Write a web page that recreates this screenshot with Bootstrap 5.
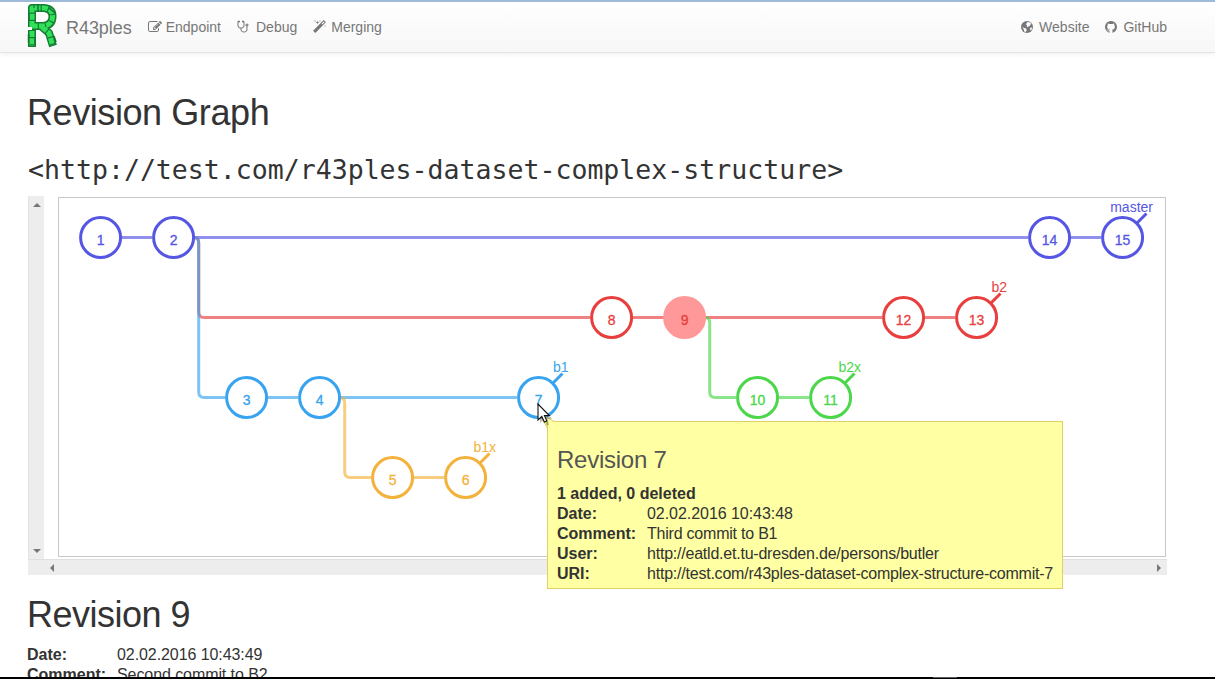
<!DOCTYPE html>
<html lang="en">
<head>
<meta charset="utf-8">
<meta name="viewport" content="width=device-width, initial-scale=1">
<title>R43ples - Revision Graph</title>
<link href="https://cdn.jsdelivr.net/npm/bootstrap@5.3.0/dist/css/bootstrap.min.css" rel="stylesheet">
<style>
  html, body { height: 100%; }
  body { font-family: "Liberation Sans", Arial, sans-serif; font-size: 16px; line-height: 20px; color: #333; background: #fff; overflow: hidden; }
  .topbar { height: 53px; padding: 0 40px 0 26px; border-top: 2px solid #9dbbd8; border-bottom: 1px solid #e4e4e4; background: linear-gradient(#fff, #f7f7f7); box-shadow: 0 1px 5px rgba(0,0,0,.07); color: #777; font-size: 14px; }
  .topbar .navbar-brand { font-size: 18px; color: #777; letter-spacing: -.05px; padding: 16px 8px 0 7px; line-height: 20px; margin: 0; }
  .topbar .nav-link { color: #777; line-height: 20px; padding: 15px 8px 0; gap: 4px; }
  .topbar .nav-link svg { margin-top: 3px; }
  .topbar .gap-wide { gap: 5px; }
  .topbar .ms-auto .nav-link { gap: 6px; }
  .topbar svg { fill: currentColor; flex: none; }
  .page-body { padding: 0 48px 0 28px; }
  h1 { font-size: 36px; line-height: 40px; font-weight: 400; margin: 0; letter-spacing: -.42px; position: static; }
  .page-title { padding-top: 40px; margin-left: -1px; }
  .rev-title { padding: 20px 0 10px; margin-left: -1px; letter-spacing: -.5px; }
  .graph-uri { font-family: "DejaVu Sans Mono", monospace; font-size: 26.55px; line-height: 34px; white-space: nowrap; }
  .graph-area { width: 1139px; height: 379px; margin-top: 9px; }
  .bar-v { width: 16px; height: 363px; background: #ededed; border-left: 1px solid #e3e3e3; padding: 7px 0 6px; }
  .bar-h { height: 16px; background: #ededed; border-top: 1px solid #e0e0e0; padding: 0 6px 0 22px; }
  .canvas-box { width: 1108px; height: 360px; border: 1px solid #c8c8c8; margin: 1px 0 0 14px; }
  .bar-v path, .bar-h path { fill: #777; }
  .canvas-box text { font: 14px "Liberation Sans", Arial, sans-serif; }
  .edges { fill: none; stroke-width: 3; stroke-opacity: .65; }
  .nodes circle { fill: #fff; stroke: currentColor; stroke-width: 3; }
  .nodes text, .tags text { fill: currentColor; }
  .nodes text { text-anchor: middle; stroke: currentColor; stroke-width: .3; }
  .tags text { text-anchor: end; }
  .tags path { stroke: currentColor; stroke-width: 3; }
  .nodes .picked { fill: #f99; stroke: #f99; }
  .c-master { color: #5656e4; } .c-red { color: #e83e3e; } .c-sky { color: #38a3ee; } .c-amber { color: #f3b23b; } .c-green { color: #4ad74a; }
  .rev-tip { left: 519px; top: 225px; width: 516px; height: 168px; padding: 24px 9px 0; background: #ffffa3; border: 1px solid #dfcf66; color: #333; }
  .rev-tip h2 { font-size: 24px; line-height: 28px; font-weight: 400; color: #555; margin: 0 0 10px; letter-spacing: -.25px; }
  .rev-list { display: grid; grid-template-columns: 90px auto; margin: 0; white-space: nowrap; }
  .rev-list dd { margin: 0; letter-spacing: -.08px; }
  .rev-tip .rev-list dd { letter-spacing: -.22px; }
  .rev-tip .rev-list .plain { letter-spacing: -.05px; }
  .page-body > .rev-list { margin-left: -1px; }
  .tip-caret { left: -10px; top: -9px; }
  .pointer { left: 509px; top: 207px; }
  .bottom-edge { height: 2px; background: #000; padding-left: 933px; }
  .bottom-edge span { width: 24px; height: 1px; background: #596068; }
</style>
</head>
<body class="d-flex flex-column">
<nav class="topbar navbar navbar-expand flex-shrink-0 align-items-start">
  <svg width="33" height="46" viewBox="0 0 33 46">
    <g fill="none" stroke-linejoin="round">
      <path d="M6 25V6H18Q27 7 26.500 15Q26 23.500 17 24H6M6 28V45M16 25L23 31L27 44" stroke="#147d33" stroke-width="8"/>
      <path d="M6 25V6H18Q27 7 26.500 15Q26 23.500 17 24H6M6 29V44M16 25L23 31L26.500 43" stroke="#31df58" stroke-width="5" stroke-dasharray="6 1.200"/>
      <path d="M2.500 32v9M9 35v8M3 12v6M23 6l6 5M28 34l2 6M12 2v8" stroke="#1c7137" stroke-width="1.500"/>
    </g>
  </svg>
  <a class="navbar-brand" href="#">R43ples</a>
  <ul class="navbar-nav">
    <li class="nav-item"><a class="nav-link d-flex" href="#"><svg width="14" height="14" viewBox="0 0 1792 1792"><path d="M888 1184l116-116-152-152-116 116v56h96v96h56zm440-720q-16-16-33 1l-350 350q-17 17-1 33t33-1l350-350q17-17 1-33zm80 594v190q0 119-84.500 203.500t-203.500 84.500h-832q-119 0-203.500-84.500t-84.500-203.500v-832q0-119 84.500-203.500t203.500-84.500h832q63 0 117 25 15 7 18 23 3 17-9 29l-49 49q-14 14-32 8-23-6-45-6h-832q-66 0-113 47t-47 113v832q0 66 47 113t113 47h832q66 0 113-47t47-113v-126q0-13 9-22l64-64q15-15 35-7t20 29zm-96-738l288 288-672 672h-288v-288zm444 132l-92 92-288-288 92-92q28-28 68-28t68 28l152 152q28 28 28 68t-28 68z"/></svg><span>Endpoint</span></a></li>
    <li class="nav-item"><a class="nav-link d-flex gap-wide" href="#"><svg width="14" height="14" viewBox="100 0 1600 1792"><path d="M1344 640q0-26-19-45t-45-19-45 19-19 45 19 45 45 19 45-19 19-45zm128 0q0 62-35.500 111t-92.500 70v395q0 159-131.500 271.500t-316.500 112.500-316.500-112.500-131.500-271.500v-132q-164-20-274-128t-110-252v-512q0-26 19-45t45-19q6 0 16 2 17-30 47-48t65-18q53 0 90.500 37.500t37.500 90.500-37.500 90.500-90.500 37.500q-33 0-64-18v402q0 106 94 181t226 75 226-75 94-181v-402q-31 18-64 18-53 0-90.500-37.500t-37.500-90.500 37.500-90.500 90.500-37.500q35 0 65 18t47 48q10-2 16-2 26 0 45 19t19 45v512q0 144-110 252t-274 128v132q0 106 94 181t226 75 226-75 94-181v-395q-57-21-92.500-70t-35.500-111q0-80 56-136t136-56 136 56 56 136z"/></svg><span>Debug</span></a></li>
    <li class="nav-item"><a class="nav-link d-flex" href="#"><svg width="14" height="14" viewBox="0 0 1792 1792"><path d="M1190 581l293-293-107-107-293 293zm447-293q0 27-18 45l-1286 1286q-18 18-45 18t-45-18l-198-198q-18-18-18-45t18-45l1286-1286q18-18 45-18t45 18l198 198q18 18 18 45zm-1351-190l98 30-98 30-30 98-30-98-98-30 98-30 30-98zm350 162l196 60-196 60-60 196-60-196-196-60 196-60 60-196zm930 478l98 30-98 30-30 98-30-98-98-30 98-30 30-98zm-640-640l98 30-98 30-30 98-30-98-98-30 98-30 30-98z"/></svg><span>Merging</span></a></li>
  </ul>
  <ul class="navbar-nav ms-auto">
    <li class="nav-item"><a class="nav-link d-flex" href="#"><svg width="12" height="14" viewBox="0 0 12 14"><circle cx="6" cy="7" r="6"/><path fill="#fbfbfb" d="M6.500 2L9 2.500 10.500 4 9.300 4.600 8.800 6 7.300 6.200 7.200 7.500 5.700 6.500 6 5 4.800 4.500 5.600 3.200zM1.200 6.500L3 8l1.600.3L5.800 10 4.700 12 3.200 11.400 2.800 9.600zM9.300 7.600l2 .2-.8 2-1.500.7z"/></svg><span>Website</span></a></li>
    <li class="nav-item"><a class="nav-link d-flex" href="#"><svg width="12" height="14" viewBox="128 0 1536 1792"><path d="M896 128q209 0 385.500 103t279.500 279.500 103 385.500q0 251-146.500 451.500t-378.500 277.500q-27 5-40-7t-13-30q0-3 .5-76.500t.5-134.500q0-97-52-142 57-6 102.500-18t94-39 81-66.500 53-105 20.500-150.500q0-119-79-206 37-91-8-204-28-9-81 11t-92 44l-38 24q-93-26-192-26t-192 26q-16-11-42.500-27t-83.500-38.500-85-13.500q-45 113-8 204-79 87-79 206 0 85 20.500 150t52.500 105 80.500 67 94 39 102.500 18q-39 36-49 103-21 10-45 15t-57 5-65.500-21.500-55.500-62.500q-19-32-48.500-52t-49.500-24l-20-3q-21 0-29 4.500t-5 11.500 9 14 13 12l7 5q22 10 43.500 38t31.500 51l10 23q13 38 44 61.500t67 30 69.500 7 55.500-3.500l23-4q0 38 .5 88.500t.5 54.500q0 18-13 30t-40 7q-232-77-378.500-277.500t-146.500-451.500q0-209 103-385.500t279.500-279.500 385.500-103z"/></svg><span>GitHub</span></a></li>
  </ul>
</nav>
<main class="page-body flex-grow-1">
  <h1 class="page-title">Revision Graph</h1>
  <div class="graph-uri pt-3 pb-0 mt-1">&lt;http://test.com/r43ples-dataset-complex-structure&gt;</div>
  <section class="graph-area position-relative">
    <div class="d-flex align-items-start">
      <div class="bar-v d-flex flex-column align-items-center justify-content-between">
        <svg width="8" height="4"><path d="M0 4L4 0L8 4z"/></svg>
        <svg width="8" height="4"><path d="M0 0L4 4L8 0z"/></svg>
      </div>
      <div class="canvas-box">
        <svg class="d-block" width="1106" height="358" viewBox="59 198 1106 358">
          <g class="edges">
            <g stroke="#5656e4"><path d="M122 237.500H152M194 237.500H1028M1071 237.500H1101"/></g>
            <g stroke="#e83e3e"><path d="M194 237.500Q198.700 237.500 198.700 243V312Q198.700 317.500 204 317.500H590M633 317.500H665M705 317.500H882M925 317.500H955"/></g>
            <g stroke="#38a3ee"><path d="M194 237.500Q198.700 237.500 198.700 243V392Q198.700 397.500 204 397.500H225M268 397.500H298M340 397.500H517"/></g>
            <g stroke="#f3b23b"><path d="M340 397.500Q344.700 397.500 344.700 403V472Q344.700 477.500 350 477.500H371M414 477.500H444"/></g>
            <g stroke="#4ad74a"><path d="M705 317.500Q709.700 317.500 709.700 323V392Q709.700 397.500 715 397.500H736M779 397.500H809"/></g>
          </g>
          <g class="nodes">
            <g class="c-master"><circle cx="100.600" cy="237.500" r="20"/><text x="100.600" y="245">1</text><circle cx="173.600" cy="237.500" r="20"/><text x="173.600" y="245">2</text><circle cx="1049.600" cy="237.500" r="20"/><text x="1049.600" y="245">14</text><circle cx="1122.600" cy="237.500" r="20"/><text x="1122.600" y="245">15</text></g>
            <g class="c-red"><circle cx="611.600" cy="317.500" r="20"/><text x="611.600" y="325">8</text><circle class="picked" cx="684.600" cy="317.500" r="20"/><text x="684.600" y="325">9</text><circle cx="903.600" cy="317.500" r="20"/><text x="903.600" y="325">12</text><circle cx="976.600" cy="317.500" r="20"/><text x="976.600" y="325">13</text></g>
            <g class="c-sky"><circle cx="246.600" cy="397.500" r="20"/><text x="246.600" y="405">3</text><circle cx="319.600" cy="397.500" r="20"/><text x="319.600" y="405">4</text><circle cx="538.600" cy="397.500" r="20"/><text x="538.600" y="405">7</text></g>
            <g class="c-amber"><circle cx="392.600" cy="477.500" r="20"/><text x="392.600" y="485">5</text><circle cx="465.600" cy="477.500" r="20"/><text x="465.600" y="485">6</text></g>
            <g class="c-green"><circle cx="757.600" cy="397.500" r="20"/><text x="757.600" y="405">10</text><circle cx="830.600" cy="397.500" r="20"/><text x="830.600" y="405">11</text></g>
          </g>
          <g class="tags">
            <g class="c-master"><path d="M1137 223L1146.500 213.500"/><text x="1153" y="212">master</text></g>
            <g class="c-red"><path d="M991 303L1000.500 293.500"/><text x="1007" y="292">b2</text></g>
            <g class="c-sky"><path d="M553 383L562.500 373.500"/><text x="568.500" y="372">b1</text></g>
            <g class="c-amber"><path d="M480 463L489.500 453.500"/><text x="496" y="452">b1x</text></g>
            <g class="c-green"><path d="M845 383L854.500 373.500"/><text x="861" y="372">b2x</text></g>
          </g>
        </svg>
      </div>
    </div>
    <div class="bar-h d-flex align-items-center justify-content-between">
      <svg width="4" height="8"><path d="M4 0L0 4L4 8z"/></svg>
      <svg width="4" height="8"><path d="M0 0L4 4L0 8z"/></svg>
    </div>
    <div class="rev-tip position-absolute">
      <svg class="tip-caret position-absolute" width="20" height="16"><path d="M1 0L9 16V9H16z" fill="#ffffa3"/><path d="M1 0L9.500 15M1 0L16 8.500" stroke="#dfcf66" fill="none"/></svg>
      <h2>Revision 7</h2>
      <strong class="d-block">1 added, 0 deleted</strong>
      <dl class="rev-list">
        <dt>Date:</dt><dd class="plain">02.02.2016 10:43:48</dd>
        <dt>Comment:</dt><dd>Third commit to B1</dd>
        <dt>User:</dt><dd>http://eatld.et.tu-dresden.de/persons/butler</dd>
        <dt>URI:</dt><dd>http://test.com/r43ples-dataset-complex-structure-commit-7</dd>
      </dl>
    </div>
    <svg class="pointer position-absolute" width="15" height="22" viewBox="0 0 15 22"><path d="M3 3V20L7 16.500L9.500 22H12L10.500 16H15z" fill="#000" opacity=".25"/><path d="M1 1V17L4.800 13.500L7.300 19L9.800 17.900L7.400 12.500H12.300z" fill="#fff" stroke="#111" stroke-width="1.100"/></svg>
  </section>
  <h1 class="rev-title">Revision 9</h1>
  <dl class="rev-list">
    <dt>Date:</dt><dd>02.02.2016 10:43:49</dd>
    <dt>Comment:</dt><dd>Second commit to B2</dd>
  </dl>
</main>
<div class="bottom-edge fixed-bottom"><span class="d-block"></span></div>
</body>
</html>
